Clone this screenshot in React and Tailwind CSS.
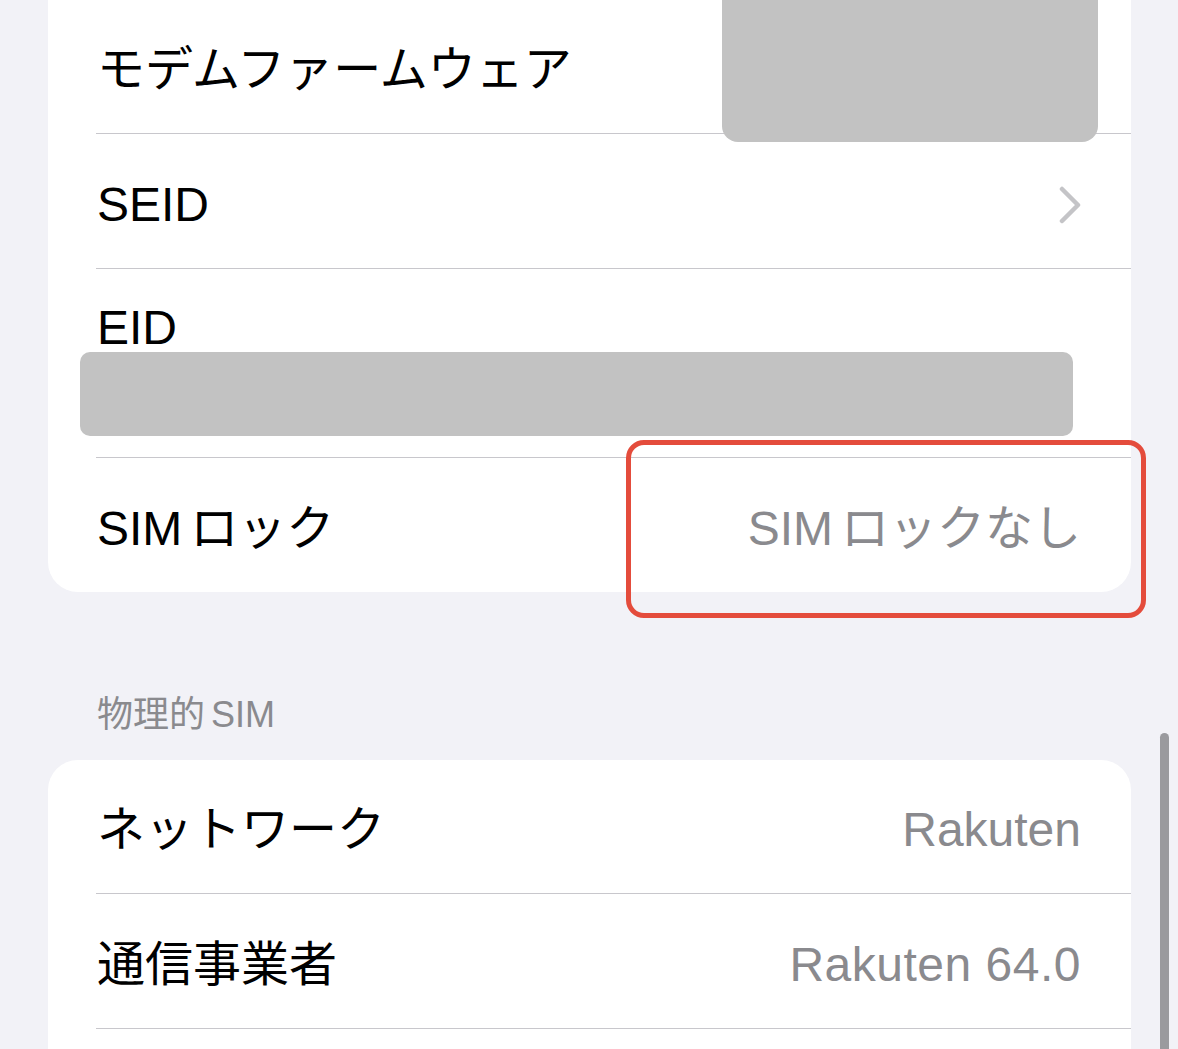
import React from 'react';

const font = { fontFamily: '"Liberation Sans", "Noto Sans CJK JP", sans-serif' };

function Chevron() {
    return (
        <svg width="22" height="38" viewBox="0 0 22 38" fill="none">
            <path d="M3 3 L19 19 L3 35" stroke="#c4c4c7" strokeWidth="4.5" strokeLinecap="round" strokeLinejoin="round" />
        </svg>
    );
}

function Row({ label, value, height, chevron, last }) {
    return (
        <div
            className={`ml-[48px] flex items-center justify-between pt-[7px] pr-[50px] ${height} ${last ? '' : 'border-b border-[#c8c7cc]'}`}
        >
            <span className="pl-px text-[48px] text-black leading-none">{label}</span>
            {value && <span className="text-[48px] text-[#8a8a8e] leading-none">{value}</span>}
            {chevron && <Chevron />}
        </div>
    );
}

export default function App() {
    return (
        <div className="relative w-[1178px] h-[1049px] overflow-hidden bg-[#f2f2f7]" style={font}>
            <div className="ml-[48px] w-[1083px] bg-white rounded-b-[30px]">
                <Row label="モデムファームウェア" height="h-[134px]" />
                <Row label="SEID" height="h-[135px]" chevron />

                {/* EID row: value is redacted */}
                <div className="ml-[48px] h-[189px] flex flex-col pt-[30px] border-b border-[#c8c7cc]">
                    <span className="pl-px text-[48px] leading-[58px] text-black">EID</span>
                    <div className="-mt-[5px] -ml-[16px] w-[993px] h-[84px] rounded-[10px] bg-[#c2c2c2]" />
                </div>

                <Row
                    label={<>SIM<span className="ml-[8px]">ロック</span></>}
                    value={<>SIM<span className="ml-[8px]">ロックなし</span></>}
                    height="h-[134px]"
                    last
                />
            </div>

            <div className="mt-[101px] ml-[97px] text-[36px] leading-[44px] text-[#8a8a8e]">
                物理的<span className="ml-[6px]">SIM</span>
            </div>

            <div className="mt-[23px] ml-[48px] w-[1083px] bg-white rounded-t-[30px] h-[400px]">
                <Row label="ネットワーク" value="Rakuten" height="h-[134px]" />
                <Row label="通信事業者" value={<span className="tracking-[0.5px]">Rakuten 64.0</span>} height="h-[135px]" />
            </div>

            {/* redaction over the modem firmware value */}
            <div className="absolute left-[722px] top-0 w-[376px] h-[142px] rounded-b-[16px] bg-[#c2c2c2]" />

            {/* highlight box */}
            <div className="absolute left-[626px] top-[440px] w-[520px] h-[178px] rounded-[18px] border-[5px] border-[#e44c3c]" />

            {/* scroll indicator */}
            <div className="absolute left-[1160px] top-[733px] w-[9px] h-[340px] rounded-full bg-[#9a9a9e]" />
        </div>
    );
}
